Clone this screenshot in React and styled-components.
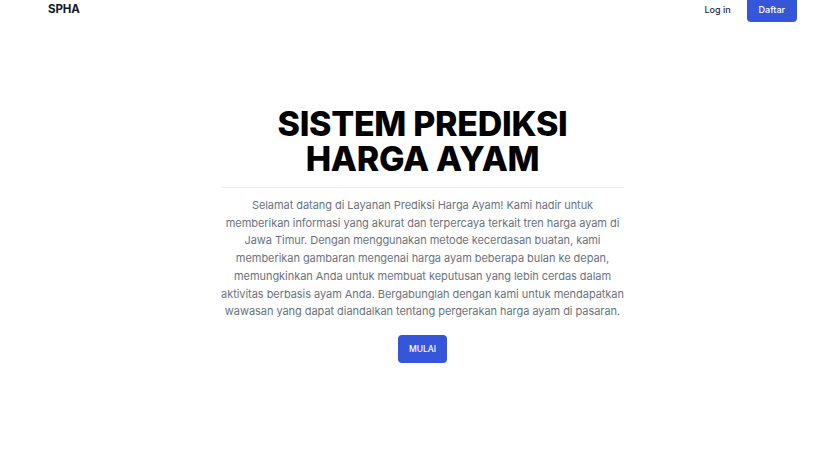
import React from "react";
import styled, { createGlobalStyle } from "styled-components";

const GlobalStyle = createGlobalStyle`
  html, body {
    margin: 0;
    padding: 0;
    background: #ffffff;
    font-family: Inter, "Noto Sans", sans-serif;
    color: #111827;
  }
`;

const Page = styled.div`
  width: 836px;
  height: 474px;
  overflow: hidden;
  display: flex;
  flex-direction: column;
`;

const Header = styled.header`
  display: flex;
  align-items: center;
  justify-content: space-between;
  margin-top: -3px;
  padding: 0 39px 0 48px;
  height: 24px;
`;

const Brand = styled.div`
  font-size: 11.5px;
  font-weight: 700;
  letter-spacing: -0.1px;
  color: #111827;
`;

const NavActions = styled.nav`
  display: flex;
  align-items: center;
  gap: 16px;
`;

const TextLink = styled.a`
  font-size: 9px;
  font-weight: 500;
  color: #1f2937;
  text-decoration: none;
`;

const Button = styled.button`
  border: none;
  border-radius: 4px;
  background: #3656da;
  color: #ffffff;
  font-family: inherit;
  font-weight: 500;
  font-size: ${(p) => p.$size || 9}px;
  padding: ${(p) => p.$pad || "6px 12px"};
  cursor: pointer;
`;

const Hero = styled.main`
  display: flex;
  flex-direction: column;
  align-items: center;
  padding: 85px 0 0 9px;
`;

const Title = styled.h1`
  margin: 0;
  font-size: 34px;
  line-height: 35px;
  font-weight: 800;
  letter-spacing: -0.3px;
  text-align: center;
  color: #000000;
`;

const Divider = styled.hr`
  width: 403px;
  margin: 11px 0 0;
  border: none;
  border-top: 1px solid #eeeeee;
`;

const Lead = styled.p`
  width: 406px;
  margin: 9px 0 0;
  font-size: 11px;
  line-height: 17.7px;
  font-weight: 400;
  letter-spacing: -0.05px;
  color: #6b7280;
  text-align: center;
`;

const Actions = styled.div`
  margin-top: 14px;
`;

export default function App() {
  return (
    <>
      <GlobalStyle />
      <Page>
        <Header>
          <Brand>SPHA</Brand>
          <NavActions>
            <TextLink href="#">Log in</TextLink>
            <Button $pad="7px 12px">Daftar</Button>
          </NavActions>
        </Header>
        <Hero>
          <Title>
            SISTEM PREDIKSI
            <br />
            HARGA AYAM
          </Title>
          <Divider />
          <Lead>
            Selamat datang di Layanan Prediksi Harga Ayam! Kami hadir untuk
            memberikan informasi yang akurat dan terpercaya terkait tren harga
            ayam di Jawa Timur. Dengan menggunakan metode kecerdasan buatan,
            kami memberikan gambaran mengenai harga ayam beberapa bulan ke
            depan, memungkinkan Anda untuk membuat keputusan yang lebih cerdas
            dalam aktivitas berbasis ayam Anda. Bergabunglah dengan kami untuk
            mendapatkan wawasan yang dapat diandalkan tentang pergerakan harga
            ayam di pasaran.
          </Lead>
          <Actions>
            <Button $size={8.5} $pad="9px 11px">MULAI</Button>
          </Actions>
        </Hero>
      </Page>
    </>
  );
}
